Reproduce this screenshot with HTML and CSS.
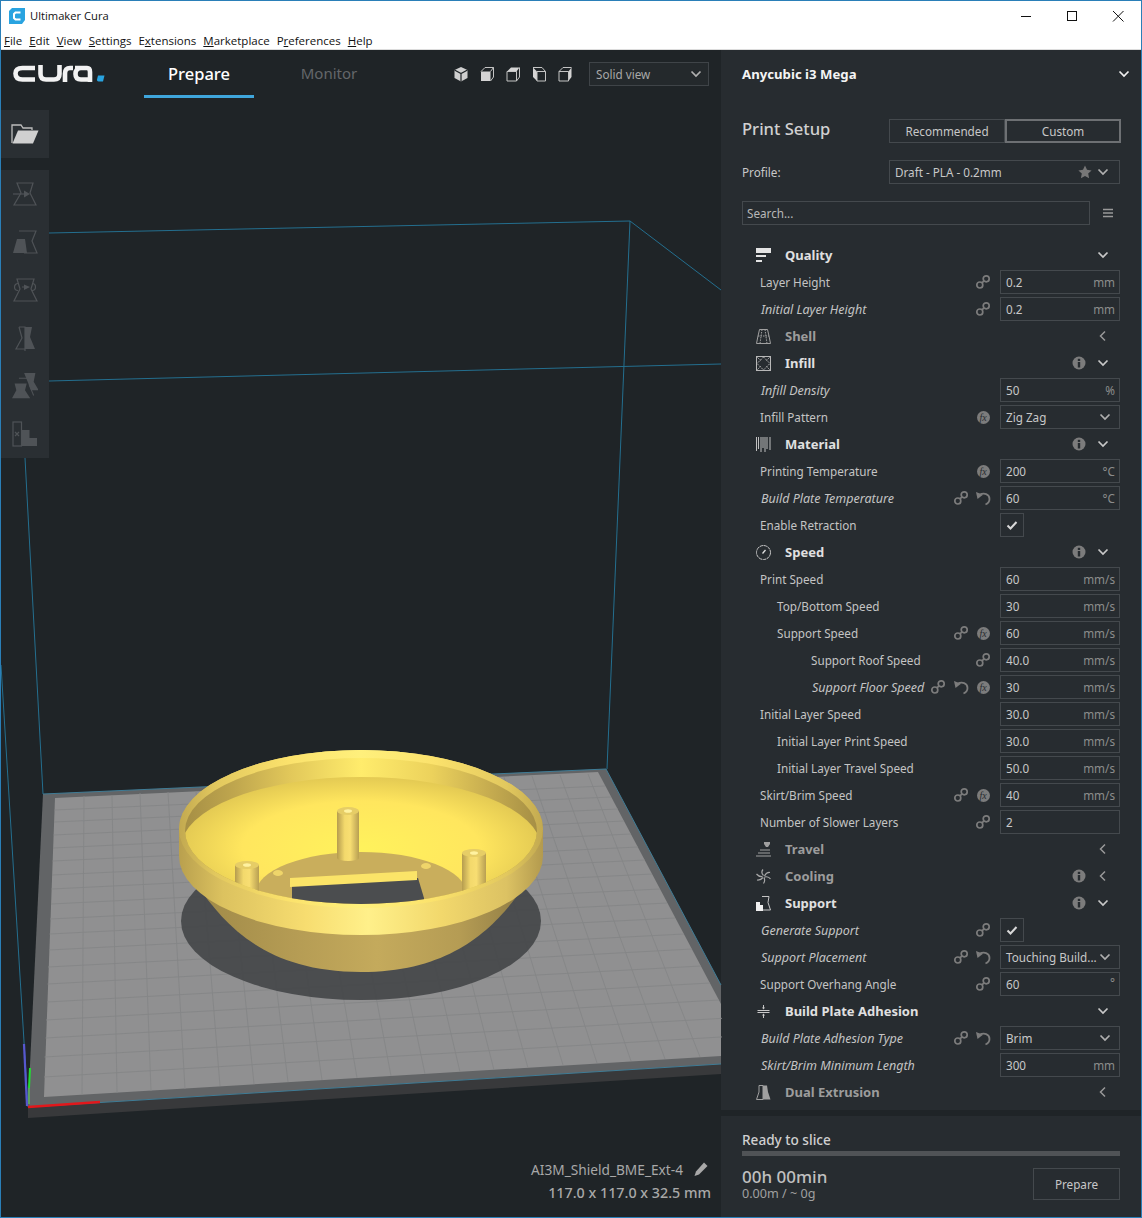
FILE: index.html
```html
<!DOCTYPE html>
<html lang="en">
<head>
<meta charset="utf-8">
<title>Ultimaker Cura</title>
<link rel="stylesheet" href="styles.css">
</head>
<body>
<svg class="sprite" aria-hidden="true">
  <symbol id="link" viewBox="0 0 16 16"><g fill="none" stroke="currentColor" stroke-width="1.7"><circle cx="4.800" cy="11" r="3"/><circle cx="11.200" cy="4.800" r="3"/><path d="M7 8.800l2-2"/></g></symbol>
  <symbol id="reset" viewBox="0 0 16 16"><path d="M4.500 4.800C9 2.500 14.500 4 14.500 9c0 2.500-1.500 4.500-4 5.500" fill="none" stroke="currentColor" stroke-width="1.800"/><path d="M1 2l1.500 7L8 4.800z" fill="currentColor"/></symbol>
  <symbol id="info" viewBox="0 0 14 14"><circle cx="7" cy="7" r="6.500" fill="currentColor"/><rect x="5.800" y="6" width="2.400" height="5.500" fill="#272c30"/><rect x="5.800" y="2.800" width="2.400" height="2.200" fill="#272c30"/></symbol>
  <symbol id="down" viewBox="0 0 12 12"><path d="M1.500 3.500L6 8l4.500-4.500" fill="none" stroke="currentColor" stroke-width="1.700"/></symbol>
  <symbol id="left" viewBox="0 0 12 12"><path d="M8 1.500L3.500 6 8 10.500" fill="none" stroke="currentColor" stroke-width="1.500"/></symbol>
  <symbol id="check" viewBox="0 0 12 12"><path d="M1.500 6.500L4.500 9.500 10.500 3" fill="none" stroke="currentColor" stroke-width="2"/></symbol>
</svg>
<div class="window">
  <header class="titlebar">
    <svg class="appicon" viewBox="0 0 16 16"><path d="M3 0h13v12l-3 4H0V3z" fill="#29a3e0"/><path d="M11.500 4.500H6.500L5 6v4l1.500 1.500h5" fill="none" stroke="#fff" stroke-width="2"/></svg>
    <span class="apptitle">Ultimaker Cura</span>
    <div class="winctrls">
      <svg class="winbtn" viewBox="0 0 46 30"><path d="M18 15.500h10" stroke="#111" fill="none"/></svg>
      <svg class="winbtn" viewBox="0 0 46 30"><rect x="18.500" y="10.500" width="9" height="9" stroke="#111" fill="none"/></svg>
      <svg class="winbtn" viewBox="0 0 46 30"><path d="M18 10l10.500 10.500M28.500 10L18 20.500" stroke="#111" fill="none"/></svg>
    </div>
  </header>
  <nav class="menubar">
    <span><u>F</u>ile</span><span><u>E</u>dit</span><span><u>V</u>iew</span><span><u>S</u>ettings</span><span>E<u>x</u>tensions</span><span><u>M</u>arketplace</span><span>P<u>r</u>eferences</span><span><u>H</u>elp</span>
  </nav>
  <main class="main">
    <section class="viewport">
      <svg class="scene" viewBox="1 50 721 1167" width="721" height="1167">
        <defs>
          <linearGradient id="band"><stop offset="0" stop-color="#b9a04e"/><stop offset=".12" stop-color="#dcc25f"/><stop offset=".35" stop-color="#f7dd70"/><stop offset=".52" stop-color="#fff08a"/><stop offset=".72" stop-color="#f2d86c"/><stop offset=".9" stop-color="#dcc263"/><stop offset="1" stop-color="#b39a4e"/></linearGradient>
          <linearGradient id="ring"><stop offset="0" stop-color="#c2a950"/><stop offset=".1" stop-color="#e2c85e"/><stop offset=".3" stop-color="#fbe26c"/><stop offset=".5" stop-color="#fff07c"/><stop offset=".7" stop-color="#fbe26c"/><stop offset=".9" stop-color="#e2c85e"/><stop offset="1" stop-color="#c2a950"/></linearGradient>
          <linearGradient id="wall"><stop offset="0" stop-color="#a68f45"/><stop offset=".14" stop-color="#bfa64e"/><stop offset=".3" stop-color="#e2c85a"/><stop offset=".5" stop-color="#ffec6c"/><stop offset=".7" stop-color="#ecd25c"/><stop offset=".86" stop-color="#c7ad50"/><stop offset="1" stop-color="#a68f45"/></linearGradient>
          <radialGradient id="slope" cx=".5" cy=".5" r=".55"><stop offset="0" stop-color="#fff25c"/><stop offset=".6" stop-color="#ffe65e"/><stop offset="1" stop-color="#dcc250"/></radialGradient>
          <linearGradient id="cone"><stop offset="0" stop-color="#a08a48"/><stop offset=".3" stop-color="#b59c54"/><stop offset=".55" stop-color="#c4aa5c"/><stop offset=".8" stop-color="#b59c54"/><stop offset="1" stop-color="#8f7c44"/></linearGradient>
          <linearGradient id="post"><stop offset="0" stop-color="#b59c4f"/><stop offset=".35" stop-color="#f3d96c"/><stop offset=".6" stop-color="#f8de72"/><stop offset="1" stop-color="#b89f52"/></linearGradient>
          <clipPath id="innerclip"><ellipse cx="361" cy="831" rx="176" ry="73"/></clipPath>
        </defs>
        <g fill="none" stroke="#246f8f" stroke-width="1">
          <path d="M49 233L630 221L721 290M630 221L607 769M49 381L721 364M25 458L43 794M1 665L28 1107"/>
        </g>
        <polygon points="28,1107 721,1064 721,1074 28,1118" fill="#38393b"/>
        <polygon points="43,794 606,769 721,985 721,1064 28,1107" fill="#626466"/>
        <polygon points="55,798 598,772 721,1004 721,1056 44,1097" fill="#909091"/>
        <g class="gridlines">
          <path d="M84 796L82 1095M112 795L117 1093M140 793L151 1091M168 792L185 1089M196 791L220 1086M224 790L254 1084M252 788L288 1082M280 787L322 1080M308 786L357 1078M336 785L391 1076M364 784L425 1074M392 782L460 1072M420 781L494 1070M448 780L528 1068M476 779L563 1065M504 777L597 1063M532 776L631 1061M560 775L665 1059M588 774L700 1057"/>
          <path d="M54.500 810L605 786M54 822L611 797M53.500 835L618 809M53 848L624 821M52.500 861L631 834M52 875L638 847M51.500 889L645 860M51 904L652 874M50 919L660 889M49.500 934L667 903M49 950L675 918M48 967L684 934M47.500 984L692 949M47 1002L701 966M46 1020L710 983M45.500 1038L719 1000M44.500 1057L728 1018M44 1077L738 1036"/>
        </g>
        <path d="M43 794L606 769L721 985M28 1107L721 1064" fill="none" stroke="#3f7c96" stroke-width="1"/>
        <ellipse cx="361" cy="921" rx="180" ry="79" fill="#46484a" fill-opacity=".94"/>
        <path d="M197 885C225 925 265 972 361 972C455 972 497 925 525 885Z" fill="url(#cone)"/>
        <path d="M179 829A182 79 0 0 1 543 829L543 856A182 79 0 0 1 179 856Z" fill="url(#band)"/>
        <ellipse cx="361" cy="829" rx="182" ry="79" fill="url(#ring)"/>
        <ellipse cx="361" cy="831" rx="176" ry="73" fill="url(#wall)"/>
        <g clip-path="url(#innerclip)">
          <ellipse cx="361" cy="848" rx="180" ry="71" fill="url(#slope)"/>
          <ellipse cx="361" cy="893" rx="105" ry="41" fill="#c9ae5c"/>
          <polygon points="292,886 418,878 424,898 424,910 292,910" fill="#4b4d4f"/>
          <polygon points="290,878 417,871 417,880 290,887" fill="#fbe468"/>
          <rect x="337" y="811" width="22" height="47" fill="url(#post)"/>
          <ellipse cx="348" cy="858" rx="11" ry="3" fill="url(#post)"/>
          <ellipse cx="348" cy="811" rx="11" ry="4" fill="#e6cd66"/>
          <ellipse cx="348" cy="811" rx="4" ry="1.800" fill="#fff2a0"/>
          <rect x="235" y="865" width="24" height="40" fill="url(#post)"/>
          <ellipse cx="247" cy="865" rx="12" ry="4" fill="#e6cd66"/>
          <ellipse cx="247" cy="865" rx="4" ry="1.800" fill="#fff2a0"/>
          <rect x="462" y="853" width="24" height="50" fill="url(#post)"/>
          <ellipse cx="474" cy="853" rx="12" ry="4" fill="#e6cd66"/>
          <ellipse cx="474" cy="853" rx="4" ry="1.800" fill="#fff2a0"/>
          <ellipse cx="278" cy="873" rx="5" ry="3" fill="#efd56a"/>
          <ellipse cx="426" cy="866" rx="5" ry="3" fill="#efd56a"/>
        </g>
        <path d="M28 1107L100 1102" stroke="#e2171b" stroke-width="2.500"/>
        <path d="M29 1104L29 1088" stroke="#5fa060" stroke-width="2"/>
        <path d="M29 1088L30 1068" stroke="#22dd33" stroke-width="2"/>
        <path d="M27 1106L24 1044" stroke="#5757cf" stroke-width="2.200"/>
      </svg>

      <div class="stagehead">
        <svg class="logo" viewBox="0 0 92 18">
          <g fill="none" stroke="#f2f2f2" stroke-width="4.600">
            <path d="M22 3H9.500Q2.500 3 2.500 8.500Q2.500 14.500 9.500 14.500H22"/>
            <path d="M27.500 0V9Q27.500 14.500 33 14.500H41Q46.500 14.500 46.500 9V0"/>
            <path d="M52 17V8.500Q52 3 57 3H60"/>
            <path d="M62 3H74Q77 3 77 7V17M77 14.500H68Q62.500 14.500 62.500 9Q62.500 3 68 3"/>
          </g>
          <path d="M85 10.500H91.500L90 16.500H85.500Q83.800 16.500 84 14.500Z" fill="#29a3e0"/>
        </svg>
        <div class="tab active">Prepare</div>
        <div class="tab">Monitor</div>
        <div class="viewicons">
          <svg viewBox="0 0 16 16"><path d="M8 1l6.500 3v8L8 15.500 1.500 12V4z" fill="#cfcfcf"/><path d="M1.500 4L8 7.500 14.500 4M8 7.500V15.500" fill="none" stroke="#1f2427" stroke-width="1.200"/></svg>
          <svg viewBox="0 0 16 16"><path d="M2 5.500h9.500V15H2z" fill="#d4d4d4"/><path d="M2 5.500L6 1.500h8.500V11l-3 4M11.500 5.500l3-4" fill="none" stroke="#c4c4c4"/></svg>
          <svg viewBox="0 0 16 16"><path d="M2 5.500L6 1.500h8.500L11.500 5.500z" fill="#d4d4d4"/><path d="M2 5.500h9.500V15H2zM14.500 1.500V11l-3 4" fill="none" stroke="#c4c4c4"/></svg>
          <svg viewBox="0 0 16 16"><path d="M2 1.500L6 5.500V15L2 11z" fill="#d4d4d4"/><path d="M2 1.500h9L14.500 5.500V15H6V5.500h8.500" fill="none" stroke="#c4c4c4"/></svg>
          <svg viewBox="0 0 16 16"><path d="M11.500 5.500l3-4V11l-3 4z" fill="#d4d4d4"/><path d="M2 5.500h9.500V15H2zM2 5.500L6 1.500h8.500" fill="none" stroke="#c4c4c4"/></svg>
        </div>
        <div class="viewselect"><span>Solid view</span><svg class="ic12"><use href="#down"/></svg></div>
      </div>

      <div class="toolbox">
        <div class="toolgroup">
          <svg class="tool" viewBox="0 0 28 20"><path d="M1 19V1h9l2 3h9v2" fill="none" stroke="#bdbdbd" stroke-width="1.300"/><path d="M7 6.500h20.500L22 19.500H1.500z" fill="#d0d0d0"/></svg>
        </div>
        <div class="toolgroup tools">
          <svg class="tool" viewBox="0 0 26 26"><path d="M5 2h16l-3 10 6 12H2l7-12z" fill="none" stroke="#4f5357" stroke-width="1.200"/><path d="M1 13h11" stroke="#4f5357" stroke-width="1.200"/><path d="M12 9.500l6 3.500-6 3.500z" fill="#4f5357"/></svg>
          <svg class="tool" viewBox="0 0 26 26"><path d="M7 2h17l-4 10 5 12H12" fill="none" stroke="#4f5357" stroke-width="1.200"/><path d="M5 10h8l2 14H1z" fill="#4f5357"/></svg>
          <svg class="tool" viewBox="0 0 26 26"><g fill="none" stroke="#4f5357" stroke-width="1.200"><path d="M5 2h17l-3 10 6 12H2l6-12z"/><path d="M6 6.500a3.500 3.500 0 0 0 0 7M20 6.500a3.500 3.500 0 0 1 0 7"/></g><path d="M10 10h5" stroke="#4f5357"/><path d="M12 7.500l6 2.500-6 3z" fill="#4f5357"/></svg>
          <svg class="tool" viewBox="0 0 26 26"><path d="M7 2h6v24M7 2l3 11-6 11h9" fill="none" stroke="#4f5357" stroke-width="1.200"/><path d="M13 2h7l-2 10 5 12H13z" fill="#4f5357"/></svg>
          <svg class="tool" viewBox="0 0 30 30"><path d="M14 0h13l-2 10 6 10H22z" fill="#4f5357"/><path d="M8 6h13l-1 8 5 12" fill="none" stroke="#4f5357" stroke-width="1.200"/><path d="M3 12h14l-2 8 6 9H0l5-9z" fill="#4f5357"/></svg>
          <svg class="tool" viewBox="0 0 26 26"><rect x="1" y="1" width="8.500" height="24" fill="none" stroke="#4f5357" stroke-width="1.200"/><path d="M3 11l4 4M7 11l-4 4" stroke="#4f5357" stroke-width="1.200"/><path d="M9.500 9h8v8H25v8H9.500z" fill="#4f5357"/></svg>
        </div>
      </div>

      <div class="modelinfo">
        <div class="modelname"><span>AI3M_Shield_BME_Ext-4</span><svg class="pencil" viewBox="0 0 16 16"><path d="M11 1.500l3.500 3.500L6 13.500 1.500 15 3 10.500z" fill="#a8a8a8"/></svg></div>
        <div class="modeldims">117.0 x 117.0 x 32.5 mm</div>
      </div>
    </section>

    <aside class="sidebar">
      <div class="setup">
        <div class="machine"><span>Anycubic i3 Mega</span><svg class="ic12 bright"><use href="#down"/></svg></div>
        <div class="setuphead"><h1>Print Setup</h1><div class="modes"><div class="mode">Recommended</div><div class="mode on">Custom</div></div></div>
        <div class="profile"><span>Profile:</span><div class="profilebox"><span>Draft - PLA - 0.2mm</span><svg class="star" viewBox="0 0 14 14"><path d="M7 .5l2 4.300 4.600.6-3.400 3.200.9 4.700L7 11l-4.100 2.300.9-4.700L.4 5.400 5 4.800z" fill="currentColor"/></svg><svg class="ic12"><use href="#down"/></svg></div></div>
        <div class="searchrow"><div class="search">Search...</div><svg class="burger" viewBox="0 0 12 10"><path d="M1 1.500h10M1 5h10M1 8.500h10" stroke="currentColor" stroke-width="1.500"/></svg></div>

        <div class="settings">
          <div class="cat open"><svg class="caticon" viewBox="0 0 15 15"><path d="M0 0h15v5H0z" fill="#e4e4e4"/><path d="M0 7h10v2H0zM0 12h6v2H0z" fill="#e4e4e4"/></svg><span class="catname">Quality</span><svg class="chev"><use href="#down"/></svg></div>
          <div class="row"><span class="label">Layer Height</span><div class="acts"><svg class="act"><use href="#link"/></svg></div><div class="field"><span>0.2</span><em>mm</em></div></div>
          <div class="row"><span class="label it">Initial Layer Height</span><div class="acts"><svg class="act"><use href="#link"/></svg></div><div class="field"><span>0.2</span><em>mm</em></div></div>

          <div class="cat"><svg class="caticon" viewBox="0 0 15 15"><g fill="none" stroke="#a0a0a0"><path d="M3.500 .5h8L13 7l1.500 7.500H.5L2 7z"/><path d="M6 .5L4 14.500M9 .5l2 14M2 7h11" stroke-dasharray="1.500 1"/></g></svg><span class="catname">Shell</span><svg class="chev"><use href="#left"/></svg></div>
          <div class="cat open"><svg class="caticon" viewBox="0 0 15 15"><g fill="none" stroke="#b8b8b8"><rect x=".5" y=".5" width="14" height="14"/><path d="M7.500 1L14 7.500 7.500 14 1 7.500zM.5 .5l4 4M14.500 .5l-4 4M.5 14.500l4-4M14.500 14.500l-4-4" stroke-dasharray="1.500 1"/></g></svg><span class="catname">Infill</span><svg class="inf"><use href="#info"/></svg><svg class="chev"><use href="#down"/></svg></div>
          <div class="row"><span class="label it">Infill Density</span><div class="field"><span>50</span><em>%</em></div></div>
          <div class="row"><span class="label">Infill Pattern</span><div class="acts"><span class="fx">fx</span></div><div class="field sel"><span>Zig Zag</span><svg class="ic12"><use href="#down"/></svg></div></div>
          <div class="cat open"><svg class="caticon" viewBox="0 0 15 15"><path d="M.5 0v14M2.500 0v12M5 0v16M7 0v11M9 0v15M11 0v12M14 0v13" stroke="#c0c0c0" fill="none"/></svg><span class="catname">Material</span><svg class="inf"><use href="#info"/></svg><svg class="chev"><use href="#down"/></svg></div>
          <div class="row"><span class="label">Printing Temperature</span><div class="acts"><span class="fx">fx</span></div><div class="field"><span>200</span><em>°C</em></div></div>
          <div class="row"><span class="label it">Build Plate Temperature</span><div class="acts"><svg class="act"><use href="#link"/></svg><svg class="act"><use href="#reset"/></svg></div><div class="field"><span>60</span><em>°C</em></div></div>
          <div class="row"><span class="label">Enable Retraction</span><div class="checkbox"><svg class="ic12"><use href="#check"/></svg></div><div class="spacer"></div></div>

          <div class="cat open"><svg class="caticon" viewBox="0 0 15 15"><circle cx="7.500" cy="7.500" r="7" fill="none" stroke="#c8c8c8" stroke-dasharray="3.500 .6"/><path d="M6.500 8.500L9.500 5" stroke="#e0e0e0" stroke-width="1.300"/></svg><span class="catname">Speed</span><svg class="inf"><use href="#info"/></svg><svg class="chev"><use href="#down"/></svg></div>
          <div class="row"><span class="label">Print Speed</span><div class="field"><span>60</span><em>mm/s</em></div></div>
          <div class="row d1"><span class="label">Top/Bottom Speed</span><div class="field"><span>30</span><em>mm/s</em></div></div>
          <div class="row d1"><span class="label">Support Speed</span><div class="acts"><svg class="act"><use href="#link"/></svg><span class="fx">fx</span></div><div class="field"><span>60</span><em>mm/s</em></div></div>
          <div class="row d2"><span class="label">Support Roof Speed</span><div class="acts"><svg class="act"><use href="#link"/></svg></div><div class="field"><span>40.0</span><em>mm/s</em></div></div>
          <div class="row d2"><span class="label it">Support Floor Speed</span><div class="acts"><svg class="act"><use href="#link"/></svg><svg class="act"><use href="#reset"/></svg><span class="fx">fx</span></div><div class="field"><span>30</span><em>mm/s</em></div></div>
          <div class="row"><span class="label">Initial Layer Speed</span><div class="field"><span>30.0</span><em>mm/s</em></div></div>
          <div class="row d1"><span class="label">Initial Layer Print Speed</span><div class="field"><span>30.0</span><em>mm/s</em></div></div>
          <div class="row d1"><span class="label">Initial Layer Travel Speed</span><div class="field"><span>50.0</span><em>mm/s</em></div></div>
          <div class="row"><span class="label">Skirt/Brim Speed</span><div class="acts"><svg class="act"><use href="#link"/></svg><span class="fx">fx</span></div><div class="field"><span>40</span><em>mm/s</em></div></div>
          <div class="row"><span class="label">Number of Slower Layers</span><div class="acts"><svg class="act"><use href="#link"/></svg></div><div class="field"><span>2</span></div></div>

          <div class="cat"><svg class="caticon" viewBox="0 0 15 15"><path d="M8 0h6v2l-2 3h-2L8 2z" fill="#a0a0a0"/><path d="M4 8h10M2 11h12M0 14h15" stroke="#a0a0a0" fill="none"/></svg><span class="catname">Travel</span><svg class="chev"><use href="#left"/></svg></div>
          <div class="cat"><svg class="caticon" viewBox="0 0 15 15"><g fill="none" stroke="#a8a8a8" stroke-width="1.200"><path d="M7.500 6.500Q4.500 3.500 7 .5M8.500 7Q10.500 3 14 3.500M8.500 8Q12.500 7 14.500 10M8 8.500Q9.500 12 7.500 14.500M7 8.500Q4.500 11.500 1 11M6.500 7.500Q3 8 .5 5"/></g></svg><span class="catname">Cooling</span><svg class="inf"><use href="#info"/></svg><svg class="chev"><use href="#left"/></svg></div>
          <div class="cat open"><svg class="caticon" viewBox="0 0 15 15"><path d="M6 .5h7l-1 6 2.500 7.500H7" fill="none" stroke="#c4c4c4"/><path d="M0 6h4v3h3v6H0z" fill="#f0f0f0"/></svg><span class="catname">Support</span><svg class="inf"><use href="#info"/></svg><svg class="chev"><use href="#down"/></svg></div>
          <div class="row"><span class="label it">Generate Support</span><div class="acts"><svg class="act"><use href="#link"/></svg></div><div class="checkbox"><svg class="ic12"><use href="#check"/></svg></div><div class="spacer"></div></div>
          <div class="row"><span class="label it">Support Placement</span><div class="acts"><svg class="act"><use href="#link"/></svg><svg class="act"><use href="#reset"/></svg></div><div class="field sel"><span class="clip">Touching Build...</span><svg class="ic12"><use href="#down"/></svg></div></div>
          <div class="row"><span class="label">Support Overhang Angle</span><div class="acts"><svg class="act"><use href="#link"/></svg></div><div class="field"><span>60</span><em class="deg">°</em></div></div>
          <div class="cat open"><svg class="caticon" viewBox="0 0 15 15"><path d="M1.500 6.500h12M1.500 8.500h12" stroke="#c8c8c8" fill="none"/><path d="M7.500 1v3M7.500 11v3" stroke="#c8c8c8" fill="none"/><path d="M6 3.500h3L7.500 5.500zM6 11.500h3L7.500 9.500z" fill="#c8c8c8"/></svg><span class="catname">Build Plate Adhesion</span><svg class="chev"><use href="#down"/></svg></div>
          <div class="row"><span class="label it">Build Plate Adhesion Type</span><div class="acts"><svg class="act"><use href="#link"/></svg><svg class="act"><use href="#reset"/></svg></div><div class="field sel"><span>Brim</span><svg class="ic12"><use href="#down"/></svg></div></div>
          <div class="row"><span class="label it">Skirt/Brim Minimum Length</span><div class="field"><span>300</span><em>mm</em></div></div>
          <div class="cat"><svg class="caticon" viewBox="0 0 15 15"><path d="M3 .5h4v14H.5L3 7z" fill="none" stroke="#a0a0a0"/><path d="M7 .5h4l1 6.500 2.500 7.500H7z" fill="#a0a0a0"/></svg><span class="catname">Dual Extrusion</span><svg class="chev"><use href="#left"/></svg></div>
        </div>
      </div>

      <div class="slice">
        <div class="slicetitle">Ready to slice</div>
        <div class="progress"></div>
        <div class="slicefoot">
          <div class="estimate"><div class="time">00h 00min</div><div class="usage">0.00m / ~ 0g</div></div>
          <div class="preparebtn">Prepare</div>
        </div>
      </div>
    </aside>
  </main>
</div>
</body>
</html>
```

FILE: styles.css
```css
* { box-sizing: border-box; }
html, body { margin: 0; padding: 0; }
body { background: #1f2427; font-family: "Noto Sans", "Open Sans", sans-serif; font-size: 11.7px; color: #c8c8c8; }
.sprite { position: absolute; width: 0; height: 0; overflow: hidden; }
.window { width: 1142px; height: 1218px; border: 1px solid #2a7fb8; display: flex; flex-direction: column; overflow: hidden; }

.titlebar { height: 30px; background: #fff; display: flex; align-items: center; padding-left: 8px; color: #111; font-family: "Open Sans", sans-serif; font-size: 11.2px; }
.apptitle { margin-left: 5px; position: relative; top: -1px; }
.appicon { width: 16px; height: 16px; }
.winctrls { margin-left: auto; display: flex; }
.winbtn { width: 46px; height: 30px; display: block; }

.menubar { height: 19px; background: #fff; border-bottom: 1px solid #dcdcdc; display: flex; gap: 7px; padding-left: 3px; color: #111; font-family: "Open Sans", sans-serif; font-size: 11.500px; line-height: 19px; }

.main { flex: 1; display: flex; min-height: 0; }
.viewport { position: relative; width: 720px; background: #1f2427; display: flex; flex-direction: column; }
.scene { position: absolute; left: 0; top: 0; display: block; }
.gridlines path { fill: none; stroke: #858687; stroke-width: .9; }

.stagehead { position: relative; height: 48px; display: flex; align-items: center; padding: 0 12px; flex: none; }
.logo { width: 92px; height: 18px; flex: none; }
.tab { width: 110px; align-self: stretch; display: flex; align-items: center; justify-content: center; padding-top: 1px; border-bottom: 3px solid transparent; font-size: 15px; color: #64676a; }
.tab.active { margin-left: 39px; margin-right: 20px; font-size: 16.500px; color: #fff; font-weight: 500; border-bottom-color: #3fa6dc; }
.viewicons { margin-left: auto; display: flex; gap: 10px; color: #ccc; }
.viewicons svg { width: 16px; height: 16px; display: block; }
.viewselect { margin-left: 16px; width: 120px; height: 24px; border: 1px solid #3f4448; display: flex; align-items: center; justify-content: space-between; padding: 0 6px; color: #a8a8a8; background: #24292c; }

.ic12 { width: 12px; height: 12px; color: #b0b0b0; flex: none; }
.ic12.bright { color: #f0f0f0; }

.toolbox { position: relative; width: 48px; margin-top: 12px; display: flex; flex-direction: column; gap: 12px; }
.toolgroup { background: #2a2f33; height: 48px; display: flex; align-items: center; justify-content: center; }
.toolgroup .tool { width: 28px; height: 22px; }
.toolgroup.tools { height: 288px; flex-direction: column; justify-content: flex-start; }
.tools .tool { height: 48px; width: 26px; }

.modelinfo { position: relative; margin-top: auto; padding: 0 10px 12px 0; text-align: right; color: #a8a8a8; }
.modelname { display: flex; justify-content: flex-end; align-items: center; height: 24px; gap: 10px; padding-right: 2px; font-size: 13.700px; }
.pencil { width: 16px; height: 16px; }
.modeldims { font-weight: 500; font-size: 14.300px; line-height: 24px; }

.sidebar { width: 420px; display: flex; flex-direction: column; gap: 6px; }
.setup { flex: 1; background: #272c30; min-height: 0; }
.machine { height: 48px; display: flex; align-items: center; justify-content: space-between; padding: 0 11px 0 21px; color: #f4f4f4; font-weight: 700; font-size: 13.200px; }
.setuphead { margin: 21px 20px 0 21px; height: 24px; display: flex; align-items: center; justify-content: space-between; }
.setuphead h1 { margin: 0 0 4px; font-size: 16.600px; line-height: 20px; font-weight: 500; color: #d0d0d0; }
.modes { display: flex; }
.mode { width: 116px; height: 24px; border: 1px solid #44494d; display: flex; align-items: center; justify-content: center; color: #c8c8c8; }
.mode.on { border: 2px solid #6d7073; }
.profile { margin: 17px 21px 0; height: 24px; display: flex; align-items: center; justify-content: space-between; }
.profilebox { width: 231px; height: 24px; border: 1px solid #44494d; display: flex; align-items: center; padding: 0 10px 0 5px; }
.star { width: 14px; height: 14px; margin-left: auto; margin-right: 5px; color: #777; }
.searchrow { margin: 17px 27px 0 21px; height: 24px; display: flex; align-items: center; justify-content: space-between; }
.search { width: 348px; height: 24px; border: 1px solid #44494d; padding-left: 4px; line-height: 22px; color: #b8b8b8; }
.burger { width: 12px; height: 10px; color: #999; }

.settings { margin-top: 18px; }
.row { height: 24px; margin-bottom: 3px; display: flex; align-items: center; padding: 0 21px 0 39px; }
.row.d1 { padding-left: 56px; }
.row.d2 { padding-left: 90px; }
.label { margin-right: auto; white-space: nowrap; color: #c4c4c4; }
.label.it { font-style: italic; font-size: 12.500px; padding-left: 1px; }
.acts { display: flex; gap: 6.500px; margin-right: 9px; color: #7c7c7c; }
.act { width: 16px; height: 16px; display: block; }
.fx { width: 13px; height: 13px; margin: 1.500px; border-radius: 50%; background: #7c7c7c; color: #272c30; font-family: "Liberation Serif", serif; font-style: italic; font-size: 10px; line-height: 13px; text-align: center; }
.field { width: 120px; height: 24px; flex: none; border: 1px solid #44494d; display: flex; align-items: center; justify-content: space-between; padding: 0 4px 0 5px; color: #c8c8c8; }
.field em { font-style: normal; color: #8c8c8c; }
.field em.deg { position: relative; top: -2px; }
.field.sel { padding-right: 8px; }
.clip { white-space: nowrap; }
.checkbox { width: 24px; height: 24px; flex: none; border: 1px solid #44494d; display: flex; align-items: center; justify-content: center; }
.checkbox .ic12 { color: #d8d8d8; }
.spacer { width: 96px; flex: none; }
.cat { height: 24px; margin-bottom: 3px; display: flex; align-items: center; padding: 0 32px 0 35px; color: #9c9c9c; }
.cat.open { color: #e0e0e0; }
.caticon { width: 15px; height: 15px; flex: none; }
.catname { margin-left: 14px; margin-right: auto; font-weight: 700; font-size: 13px; }
.inf { width: 14px; height: 14px; color: #7c7c7c; margin-right: 11px; flex: none; }
.chev { width: 12px; height: 12px; flex: none; color: #c8c8c8; }
.cat:not(.open) .chev { color: #999; }

.slice { height: 101px; background: #272c30; padding: 16px 21px 0; flex: none; }
.slicetitle { height: 16px; line-height: 16px; font-weight: 500; font-size: 13.600px; color: #d0d0d0; }
.progress { height: 5px; margin-top: 3px; background: #505356; }
.slicefoot { margin-top: 12px; display: flex; justify-content: space-between; }
.time { font-size: 17px; line-height: 18px; font-weight: 500; color: #c0c0c0; }
.usage { font-size: 12.600px; line-height: 16px; color: #a0a0a0; }
.preparebtn { width: 87px; height: 32px; border: 1px solid #44494d; display: flex; align-items: center; justify-content: center; color: #c8c8c8; }
```
